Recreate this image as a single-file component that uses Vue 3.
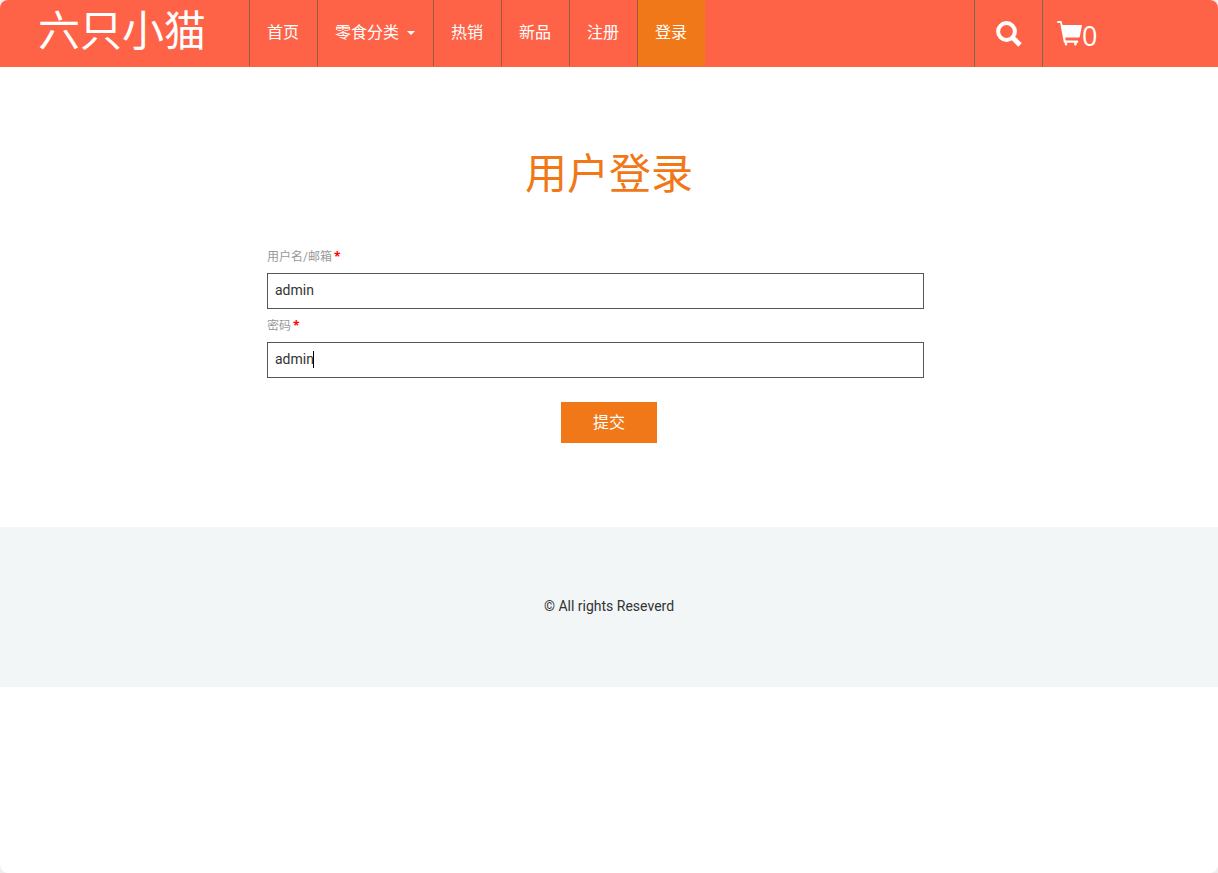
<script setup>
import { ref } from 'vue'

const links = [
  { label: '首页' },
  { label: '零食分类', menu: true },
  { label: '热销' },
  { label: '新品' },
  { label: '注册' },
  { label: '登录', active: true },
]
const account = ref('admin')
const password = ref('admin')
</script>

<template>
  <div class="page">
    <header class="header">
      <a class="brand" href="#">六只小猫</a>
      <nav class="nav">
        <a v-for="l in links" :key="l.label" href="#" class="nav-link" :class="{ active: l.active }">
          {{ l.label }}<span v-if="l.menu" class="arrow"></span>
        </a>
      </nav>
      <div class="tools">
        <a class="tool search" href="#" aria-label="搜索">
          <svg width="26" height="26" viewBox="0 0 26 26">
            <circle cx="10.5" cy="10.5" r="8.4" fill="none" stroke="#fff" stroke-width="4" />
            <path d="M16.5 16.5L24 24" stroke="#fff" stroke-width="5" />
          </svg>
        </a>
        <a class="tool cart" href="#" aria-label="购物车">
          <svg width="25" height="26" viewBox="0 0 25 26">
            <path
              fill="#fff"
              d="M1 0H3.9Q4.6 0 4.8.8L5.5 4H25L22.8 15.8Q22.6 16.6 21.8 16.6H8.2L8.7 19.6H20.5Q21.2 19.6 21.2 20.4V21.8H19.7V23.2Q19.7 24.6 18.4 24.6Q17.2 24.6 17.2 23.2V21.8H10.2V23.2Q10.2 24.6 9 24.6Q7.8 24.6 7.8 23.2V21.8H6.9L3.2 2H1Q0 2 0 1Q0 0 1 0Z"
            />
          </svg>
          <span>0</span>
        </a>
      </div>
    </header>

    <main class="main">
      <h1 class="title">用户登录</h1>
      <form class="form" @submit.prevent>
        <label class="label" for="account">用户名/邮箱<b class="star">*</b></label>
        <input id="account" v-model="account" class="input" type="text" />
        <label class="label" for="password">密码<b class="star">*</b></label>
        <div class="field">
          <input id="password" v-model="password" class="input" type="text" />
          <span class="cursor"></span>
        </div>
        <button class="submit" type="submit">提交</button>
      </form>
    </main>

    <footer class="footer">© All rights Reseverd</footer>
  </div>
</template>

<style>
body {
  margin: 0;
  background: #eee;
}
</style>

<style scoped>
.page {
  min-height: 100vh;
  overflow: hidden;
  border-radius: 8px;
  background: #fff;
  color: #333;
  font: 14px/20px Roboto, "Noto Sans CJK SC", sans-serif;
}
.page * {
  box-sizing: border-box;
}
.header {
  display: flex;
  height: 67px;
  background: #ff6347;
}
.header a {
  color: #fff;
  text-decoration: none;
}
.brand {
  width: 249px;
  padding-left: 38px;
  font-size: 42px;
  line-height: 64px;
  white-space: nowrap;
}
.nav {
  display: flex;
  height: 66px;
}
.nav-link {
  display: flex;
  align-items: center;
  padding: 0 18px 0 17px;
  border-left: 1px solid #9b5a3c;
  font-size: 16px;
  white-space: nowrap;
}
.nav-link.active {
  background: #f07818;
}
.arrow {
  margin-left: 8px;
  border: 4px solid transparent;
  border-top-color: #fff;
  border-bottom: 0;
}
.tools {
  display: flex;
  width: 244px;
  margin-left: auto;
}
.tool {
  display: flex;
  align-items: center;
  border-left: 1px solid #7d6b4d;
}
.search {
  justify-content: center;
  width: 68px;
}
.cart {
  padding-left: 14px;
  font-family: "Open Sans", sans-serif;
  font-size: 27px;
}
.cart span {
  padding-top: 4px;
}
.main {
  padding: 76px 0 84px;
}
.title {
  margin: 0;
  color: #f07818;
  font-size: 42px;
  font-weight: 400;
  line-height: 64px;
  text-align: center;
}
.form {
  width: 684px;
  max-width: 100%;
  margin: 40px auto 0;
}
.label {
  display: block;
  padding-bottom: 6px;
  color: #999;
  font-size: 12px;
}
.star {
  margin-left: 2px;
  color: #f00;
  font-family: "Open Sans", sans-serif;
}
.input {
  display: block;
  width: 96%;
  height: 36px;
  margin-bottom: 7px;
  padding: 0 7px 2px;
  border: 1px solid #555;
  border-radius: 0;
  outline: 0;
  background: #fff;
  color: #333;
  font: inherit;
}
.field {
  position: relative;
}
.cursor {
  position: absolute;
  top: 9px;
  left: 46px;
  width: 1px;
  height: 17px;
  background: #000;
}
.submit {
  display: block;
  width: 96px;
  height: 41px;
  margin: 24px auto 0;
  padding: 0;
  border: 0;
  background: #f07818;
  color: #fff;
  font: inherit;
  font-size: 16px;
}
.footer {
  padding: 69px 0 71px;
  background: #f2f6f7;
  text-align: center;
}
</style>
